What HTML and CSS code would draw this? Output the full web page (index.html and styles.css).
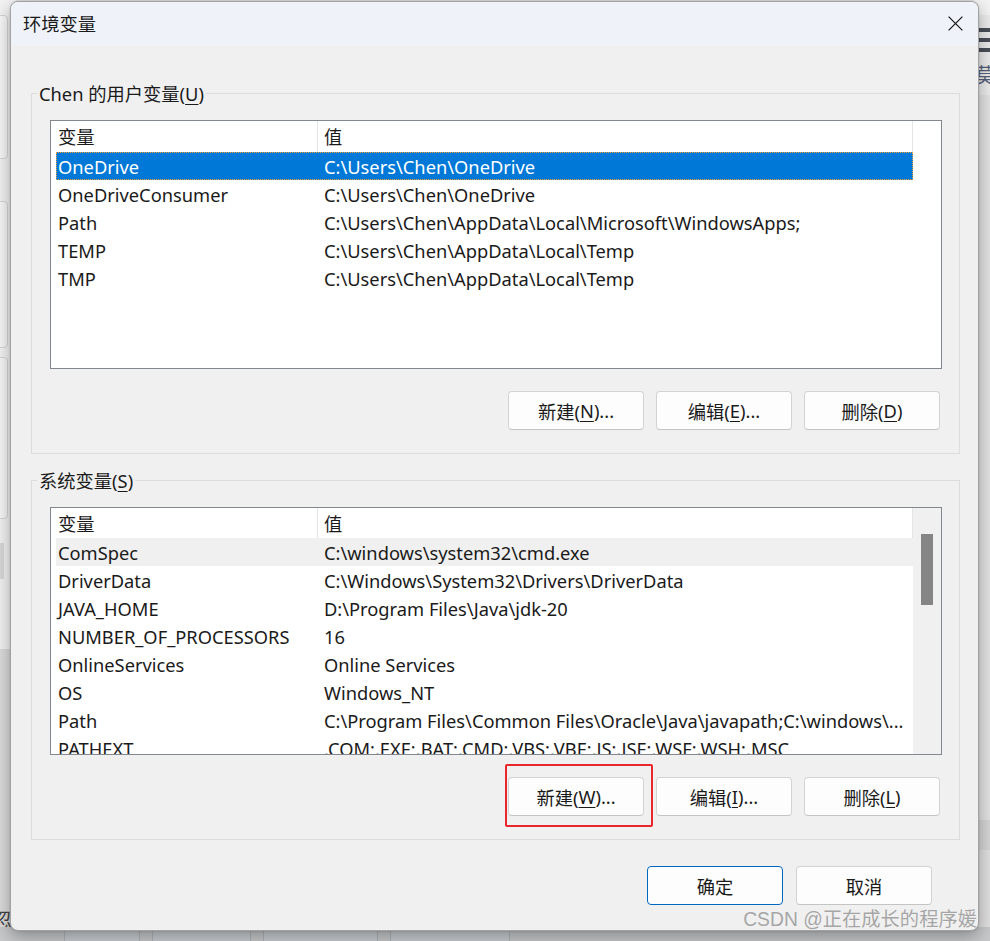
FILE: index.html
```html
<!DOCTYPE html>
<html lang="zh-CN">
<head>
<meta charset="utf-8">
<title>环境变量</title>
<link rel="stylesheet" href="styles.css">
</head>
<body>
<div class="desktop">
  <div class="bg-left">
    <div class="bg-panel bp1"></div>
    <div class="bg-panel bp2"></div>
    <div class="bg-panel bp3"></div>
    <div class="bg-bar"></div>
    <div class="bg-dark"></div>
    <span class="bg-glyph-left">忽</span>
  </div>
  <div class="bg-right">
    <div class="bg-icon"><i></i><i></i><i></i></div>
    <span class="bg-glyph-right">莫</span>
  </div>
  <div class="bg-bottom">
    <div class="bg-key k1"></div>
    <div class="bg-key k2"></div>
    <div class="bg-key k3"></div>
    <div class="bg-key k4"></div>
  </div>
</div>

<div class="dialog">
  <div class="titlebar">
    <span class="title">环境变量</span>
    <svg class="close" width="15" height="15" viewBox="0 0 15 15"><path d="M0.6 0.6 L14.4 14.4 M14.4 0.6 L0.6 14.4" stroke="#1a1a1a" stroke-width="1.25" fill="none"/></svg>
  </div>
  <div class="content">
    <section class="group">
      <div class="group-title">Chen 的用户变量(<u>U</u>)</div>
      <div class="list list-user">
        <div class="table">
          <div class="row head"><div class="c1">变量</div><div class="c2">值</div></div>
          <div class="row selected"><div class="c1">OneDrive</div><div class="c2">C:\Users\Chen\OneDrive</div></div>
          <div class="row"><div class="c1">OneDriveConsumer</div><div class="c2">C:\Users\Chen\OneDrive</div></div>
          <div class="row"><div class="c1">Path</div><div class="c2">C:\Users\Chen\AppData\Local\Microsoft\WindowsApps;</div></div>
          <div class="row"><div class="c1">TEMP</div><div class="c2">C:\Users\Chen\AppData\Local\Temp</div></div>
          <div class="row"><div class="c1">TMP</div><div class="c2">C:\Users\Chen\AppData\Local\Temp</div></div>
        </div>
      </div>
      <div class="btns">
        <button class="btn">新建(<u>N</u>)...</button>
        <button class="btn">编辑(<u>E</u>)...</button>
        <button class="btn">删除(<u>D</u>)</button>
      </div>
    </section>

    <section class="group">
      <div class="group-title">系统变量(<u>S</u>)</div>
      <div class="list list-sys">
        <div class="table">
          <div class="row head"><div class="c1">变量</div><div class="c2">值</div></div>
          <div class="row hover"><div class="c1">ComSpec</div><div class="c2">C:\windows\system32\cmd.exe</div></div>
          <div class="row"><div class="c1">DriverData</div><div class="c2">C:\Windows\System32\Drivers\DriverData</div></div>
          <div class="row"><div class="c1">JAVA_HOME</div><div class="c2">D:\Program Files\Java\jdk-20</div></div>
          <div class="row"><div class="c1">NUMBER_OF_PROCESSORS</div><div class="c2">16</div></div>
          <div class="row"><div class="c1">OnlineServices</div><div class="c2">Online Services</div></div>
          <div class="row"><div class="c1">OS</div><div class="c2">Windows_NT</div></div>
          <div class="row"><div class="c1">Path</div><div class="c2">C:\Program Files\Common Files\Oracle\Java\javapath;C:\windows\...</div></div>
          <div class="row"><div class="c1">PATHEXT</div><div class="c2">.COM;.EXE;.BAT;.CMD;.VBS;.VBE;.JS;.JSE;.WSF;.WSH;.MSC</div></div>
        </div>
        <div class="scroll"><div class="thumb"></div></div>
      </div>
      <div class="btns">
        <button class="btn">新建(<u>W</u>)...</button>
        <button class="btn">编辑(<u>I</u>)...</button>
        <button class="btn">删除(<u>L</u>)</button>
      </div>
    </section>

    <div class="footer">
      <button class="btn primary">确定</button>
      <button class="btn">取消</button>
    </div>
  </div>
</div>

<div class="highlight"></div>
<div class="watermark">CSDN @正在成长的程序媛</div>
</body>
</html>
```

FILE: styles.css
```css
* { box-sizing: border-box; }
html, body { margin: 0; padding: 0; }
body {
  width: 990px;
  height: 941px;
  overflow: hidden;
  position: relative;
  background: #e6e6e6;
  font-family: "Noto Sans", "Noto Sans CJK SC", sans-serif;
  font-size: 18.3px;
  color: #1a1a1a;
}

/* ---------- background app behind the dialog ---------- */
.desktop { position: absolute; inset: 0; }
.bg-left {
  position: absolute; left: 0; top: 0; width: 16px; height: 941px;
  background: #f3f3f3;
  display: flex; flex-direction: column;
}
.bg-panel { margin-left: -6px; width: 14px; border: 1px solid #d6d6d6; border-radius: 4px; background: #f7f7f7; }
.bp1 { margin-top: 15px; height: 144px; }
.bp2 { margin-top: 42px; height: 147px; }
.bp3 { margin-top: 9px; height: 162px; }
.bg-bar { margin-top: 24px; height: 36px; background: #d9d9d9; width: 4px; }
.bg-dark { margin-top: 70px; flex: 1; background: #dcdcdc; }
.bg-glyph-left { position: absolute; left: -8px; top: 904px; font-size: 20px; color: #444; }

.bg-right {
  position: absolute; right: 0; top: 0; width: 16px; height: 941px;
  background: linear-gradient(#f4f4f4 0 15px, #ececec 15px 95px, #e3e3e3 95px 820px, #d6d6d6 820px 850px, #e0e0e0 850px);
}
.bg-icon { position: absolute; left: 4px; top: 28px; display: flex; flex-direction: column; gap: 6px; }
.bg-icon i { display: block; width: 14px; height: 4px; background: #4a4f58; }
.bg-glyph-right { position: absolute; left: 1px; top: 60px; font-size: 20px; color: #56607a; }

.bg-bottom {
  position: absolute; left: 0; bottom: 0; width: 990px; height: 14px;
  background: #c7c9cb;
  display: flex; gap: 12px; padding-left: 64px;
}
.bg-key { height: 20px; border: 1px solid #aeb4ba; border-radius: 5px; background: #c9cdd1; }
.k1 { width: 76px; }
.k2 { width: 99px; }
.k3 { width: 115px; }
.k4 { width: 120px; }

/* ---------- dialog ---------- */
.dialog {
  position: absolute; left: 10px; top: 1px;
  width: 969px; height: 930px;
  background: #f0f0f0;
  border: 1px solid #a3a3a3;
  border-radius: 8px;
  box-shadow: 0 6px 18px rgba(0,0,0,0.32), 0 0 2px rgba(0,0,0,0.2);
  overflow: hidden;
  display: flex; flex-direction: column;
}
.titlebar {
  flex: none;
  height: 43px;
  background: #eff3f9;
  display: flex; align-items: center; justify-content: space-between;
  padding-left: 12px;
}
.title { line-height: 22px; }
.close { margin-right: 15px; }

.content { padding: 48px 18px 0 20px; }

.group {
  border: 1px solid #dcdcdc;
  padding: 0 17px 23px 18px;
}
.group + .group { margin-top: 26px; }
.group-title {
  width: max-content;
  height: 26px; line-height: 26px;
  margin: -13px 0 0 -13px;
  padding: 0 2px;
  background: #f0f0f0;
}
u { text-decoration-thickness: 1px; text-underline-offset: 3px; }

.list {
  margin-top: 13px;
  height: 249px;
  border: 1px solid #828790;
  background: #fff;
  display: flex;
  padding-left: 5px;
  overflow: hidden;
}
.list-sys { height: 248px; }
.table { width: 857px; flex: none; }
.row { display: flex; height: 28px; line-height: 29px; white-space: nowrap; }
.row.head { height: 30px; line-height: 31px; }
.list-user .row.head { height: 31px; }
.c1 { width: 262px; flex: none; padding-left: 2px; overflow: hidden; }
.c2 { flex: 1; min-width: 0; padding-left: 6px; overflow: hidden; }
.head .c1, .head .c2 { border-right: 1px solid #e5e5e5; }
.row.selected {
  background: #0078d7; color: #fff;
  outline: 1px dotted #f0a23c; outline-offset: -1px;
}
.row.hover { background: #f0f0f0; }

.scroll { width: 28px; flex: none; background: #f0f0f0; padding: 26px 8px 0 8px; }
.thumb { width: 12px; height: 71px; background: #858585; }

.btns {
  display: flex; justify-content: flex-end; gap: 12px;
  margin-top: 22px; padding-right: 2px;
}
.btn {
  width: 136px; height: 39px;
  border: 1px solid #d3d3d3; border-bottom-color: #c4c4c4;
  border-radius: 4px;
  background: #fdfdfd;
  font: inherit; color: #1a1a1a;
  padding: 0;
  display: flex; align-items: center; justify-content: center;
}
.btn.primary { border: 1px solid #0067c0; }

.footer {
  display: flex; justify-content: flex-end; gap: 13px;
  margin-top: 26px; padding-right: 28px;
}

/* ---------- annotations over the screenshot ---------- */
.highlight {
  position: absolute; left: 505px; top: 764px;
  width: 148px; height: 63px;
  border: 2px solid #e8262b;
  border-radius: 2px;
}
.watermark {
  position: absolute; right: 13px; top: 906px;
  font-family: "Liberation Sans", "Noto Sans CJK SC", sans-serif;
  font-size: 19.3px; line-height: 28px;
  color: rgba(140,140,140,0.75);
  white-space: nowrap;
}
```
